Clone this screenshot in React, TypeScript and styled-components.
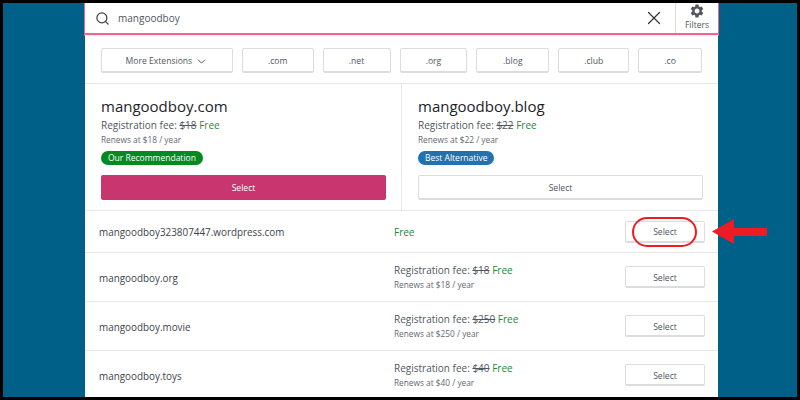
import { createGlobalStyle, styled } from 'styled-components';
import { ChevronDown, Search, X } from 'lucide-react';
import { MdSettings } from 'react-icons/md';

const GlobalStyle = createGlobalStyle`
  html, body {
    margin: 0;
    padding: 0;
  }
  body {
    width: 800px;
    height: 400px;
    overflow: hidden;
    font-family: 'Open Sans', 'Noto Sans', sans-serif;
  }
`;

const extensions = [
  { label: '.com', width: 72 },
  { label: '.net', width: 68 },
  { label: '.org', width: 68 },
  { label: '.blog', width: 73 },
  { label: '.club', width: 71 },
  { label: '.co', width: 64 },
];

const rows = [
  { name: 'mangoodboy.org', price: 18 },
  { name: 'mangoodboy.movie', price: 250 },
  { name: 'mangoodboy.toys', price: 40 },
];

const App = () => {
  return (
    <Page>
      <GlobalStyle />
      <Panel>
        <SearchBar>
          <Search size={15} strokeWidth={2} color="#3c434a" />
          <SearchText>mangoodboy</SearchText>
          <Clear>
            <X size={22} strokeWidth={1.3} />
          </Clear>
          <Filters>
            <MdSettings size={16} />
            <span>Filters</span>
          </Filters>
        </SearchBar>

        <ExtensionBar>
          <MoreButton>
            More Extensions <ChevronDown size={13} strokeWidth={1.8} />
          </MoreButton>
          {extensions.map((ext) => (
            <ExtButton key={ext.label} $width={ext.width}>
              {ext.label}
            </ExtButton>
          ))}
        </ExtensionBar>

        <Featured>
          <Card>
            <CardTitle>mangoodboy.com</CardTitle>
            <Fee>
              Registration fee: <s>$18</s> <FreeText>Free</FreeText>
            </Fee>
            <Renews>Renews at $18 / year</Renews>
            <Badge $color="#008a20">Our Recommendation</Badge>
            <WideButton $primary>Select</WideButton>
          </Card>
          <Card $divided>
            <CardTitle>mangoodboy.blog</CardTitle>
            <Fee>
              Registration fee: <s>$22</s> <FreeText>Free</FreeText>
            </Fee>
            <Renews>Renews at $22 / year</Renews>
            <Badge $color="#2271b1">Best Alternative</Badge>
            <WideButton>Select</WideButton>
          </Card>
        </Featured>

        <Row $height={42}>
          <RowName>mangoodboy323807447.wordpress.com</RowName>
          <RowPrice>
            <FreeText>Free</FreeText>
          </RowPrice>
          <SelectWrap>
            <SelectButton>Select</SelectButton>
            <Ring />
          </SelectWrap>
        </Row>
        {rows.map((row) => (
          <Row key={row.name} $height={49}>
            <RowName>{row.name}</RowName>
            <RowPrice>
              <Fee>
                Registration fee: <s>${row.price}</s> <FreeText>Free</FreeText>
              </Fee>
              <Renews>Renews at ${row.price} / year</Renews>
            </RowPrice>
            <SelectWrap>
              <SelectButton>Select</SelectButton>
            </SelectWrap>
          </Row>
        ))}
      </Panel>

      <Arrow width="55" height="25" viewBox="0 0 55 25">
        <path d="M0 12.5 L22 0 L22 9 L55 9 L55 17 L22 17 L22 25 Z" fill="#ed1c24" />
      </Arrow>
    </Page>
  );
};

const Page = styled.div`
  position: relative;
  box-sizing: border-box;
  width: 800px;
  height: 400px;
  overflow: hidden;
  padding-left: 82px;
  background: #006088;
  border: 3px solid #000;
`;

const Panel = styled.main`
  width: 633px;
  height: 394px;
  background: #fff;
`;

const SearchBar = styled.div`
  box-sizing: border-box;
  height: 32px;
  margin: 0 -1px;
  display: flex;
  align-items: center;
  padding-left: 10px;
  border: 1px solid #f0648f;
  border-top: 0;
  border-bottom-width: 2px;
  border-radius: 0 0 2px 2px;
  box-shadow: 0 1px 0 #ececed;
`;

const SearchText = styled.span`
  flex: 1;
  margin-left: 8px;
  font-size: 10px;
  color: #50575e;
`;

const Clear = styled.span`
  display: flex;
  margin-right: 10px;
  color: #2c3338;
`;

const Filters = styled.div`
  box-sizing: border-box;
  width: 43px;
  height: 30px;
  display: flex;
  flex-direction: column;
  align-items: center;
  border-left: 1px solid #dcdcde;
  color: #50575e;
  font-size: 8.5px;
  line-height: 12px;
`;

const ExtensionBar = styled.div`
  box-sizing: border-box;
  height: 49px;
  display: flex;
  align-items: flex-start;
  gap: 9px;
  padding: 13px 16px 0;
  border-bottom: 1px solid #e8e8e9;
`;

const OutlineButton = styled.button`
  box-sizing: border-box;
  height: 25px;
  padding: 2px 0 0;
  display: flex;
  align-items: center;
  justify-content: center;
  gap: 3px;
  background: #fff;
  border: 1px solid #dcdcde;
  border-bottom-width: 2px;
  border-radius: 2px;
  color: #50575e;
  font-family: inherit;
  font-size: 8.6px;
`;

const MoreButton = styled(OutlineButton)`
  width: 132px;
`;

const ExtButton = styled(OutlineButton)<{ $width: number }>`
  width: ${({ $width }) => $width}px;
`;

const Featured = styled.section`
  display: flex;
  height: 126px;
`;

const Card = styled.article<{ $divided?: boolean }>`
  box-sizing: border-box;
  width: ${({ $divided }) => ($divided ? 317 : 316)}px;
  padding: 11px 16px 0;
  ${({ $divided }) => $divided && 'border-left: 1px solid #e8e8e9;'}
`;

const CardTitle = styled.h2`
  margin: 0;
  font-size: 15px;
  line-height: 23px;
  font-weight: 400;
  color: #1d2327;
`;

const Fee = styled.div`
  font-size: 10px;
  line-height: 15px;
  color: #50575e;
`;

const Renews = styled.div`
  font-size: 8.3px;
  line-height: 13px;
  color: #646970;
`;

const FreeText = styled.span`
  color: #1a8a34;
`;

const Badge = styled.span<{ $color: string }>`
  display: table;
  margin-top: 5px;
  padding: 0 7px;
  height: 14px;
  line-height: 14px;
  border-radius: 8px;
  background: ${({ $color }) => $color};
  color: #fff;
  font-size: 8.5px;
`;

const WideButton = styled.button<{ $primary?: boolean }>`
  box-sizing: border-box;
  display: block;
  width: 285px;
  height: 25px;
  margin-top: 10px;
  padding: 2px 0 0;
  border: 1px solid ${({ $primary }) => ($primary ? '#c9356e' : '#dcdcde')};
  border-bottom-width: 2px;
  border-radius: 2px;
  background: ${({ $primary }) => ($primary ? '#c9356e' : '#fff')};
  color: ${({ $primary }) => ($primary ? '#fff' : '#50575e')};
  font-family: inherit;
  font-size: 8.6px;
`;

const Row = styled.div<{ $height: number }>`
  box-sizing: border-box;
  height: ${({ $height }) => $height}px;
  display: flex;
  align-items: center;
  padding: 0 13px 0 14px;
  border-top: 1px solid #e8e8e9;
`;

const RowName = styled.div`
  width: 295px;
  padding-top: 1px;
  font-size: 9.9px;
  color: #3c434a;
`;

const RowPrice = styled.div`
  flex: 1;
  font-size: 10px;
`;

const SelectWrap = styled.div`
  position: relative;
  width: 80px;
`;

const SelectButton = styled(OutlineButton)`
  width: 80px;
  height: 22px;
`;

const Ring = styled.span`
  position: absolute;
  top: -4px;
  left: 7px;
  width: 65px;
  height: 30px;
  box-sizing: border-box;
  border: 2.7px solid #ed1c24;
  border-radius: 15px;
`;

const Arrow = styled.svg`
  position: absolute;
  left: 709px;
  top: 216px;
`;

export default App;
